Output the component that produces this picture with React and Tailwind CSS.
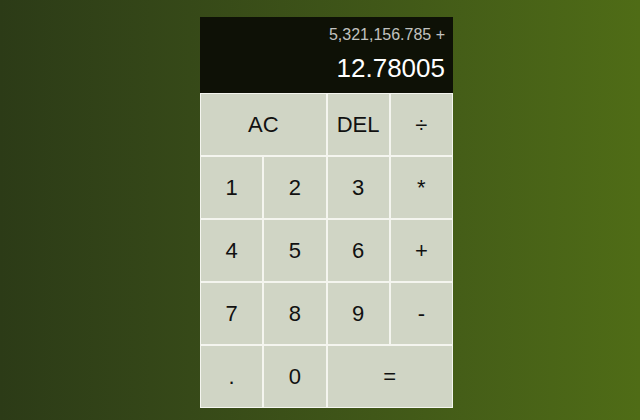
import React from "react";

const keys = [
  { label: "AC", span: "col-span-2" },
  { label: "DEL" },
  { label: "÷" },
  { label: "1" },
  { label: "2" },
  { label: "3" },
  { label: "*" },
  { label: "4" },
  { label: "5" },
  { label: "6" },
  { label: "+" },
  { label: "7" },
  { label: "8" },
  { label: "9" },
  { label: "-" },
  { label: "." },
  { label: "0" },
  { label: "=", span: "col-span-2" },
];

const App = () => {
  return (
    <div
      className="w-[640px] h-[420px] flex justify-center pt-[17px] pl-[13px] bg-gradient-to-r from-[#2c3b17] to-[#4f6c16]"
      style={{ fontFamily: '"Liberation Sans", Arial, sans-serif' }}
    >
      <div className="w-[253px] flex flex-col">
        {/* Output screen */}
        <div className="h-[76px] bg-[#0e1106] flex flex-col items-end justify-around pr-[8px] pt-[4px] pb-[6px]">
          <div className="text-[16px] leading-none text-white/75">5,321,156.785 +</div>
          <div className="text-[26px] leading-none text-white">12.78005</div>
        </div>

        {/* Keypad */}
        <div className="grid grid-cols-4 auto-rows-[63px]">
          {keys.map((key, index) => (
            <button
              key={`key-${index}`}
              className={`${key.span || ""} border border-[#f4f5ef] bg-[#d0d5c5] text-[#111] text-[22px] leading-none`}
            >
              {key.label}
            </button>
          ))}
        </div>
      </div>
    </div>
  );
};

export default App;
